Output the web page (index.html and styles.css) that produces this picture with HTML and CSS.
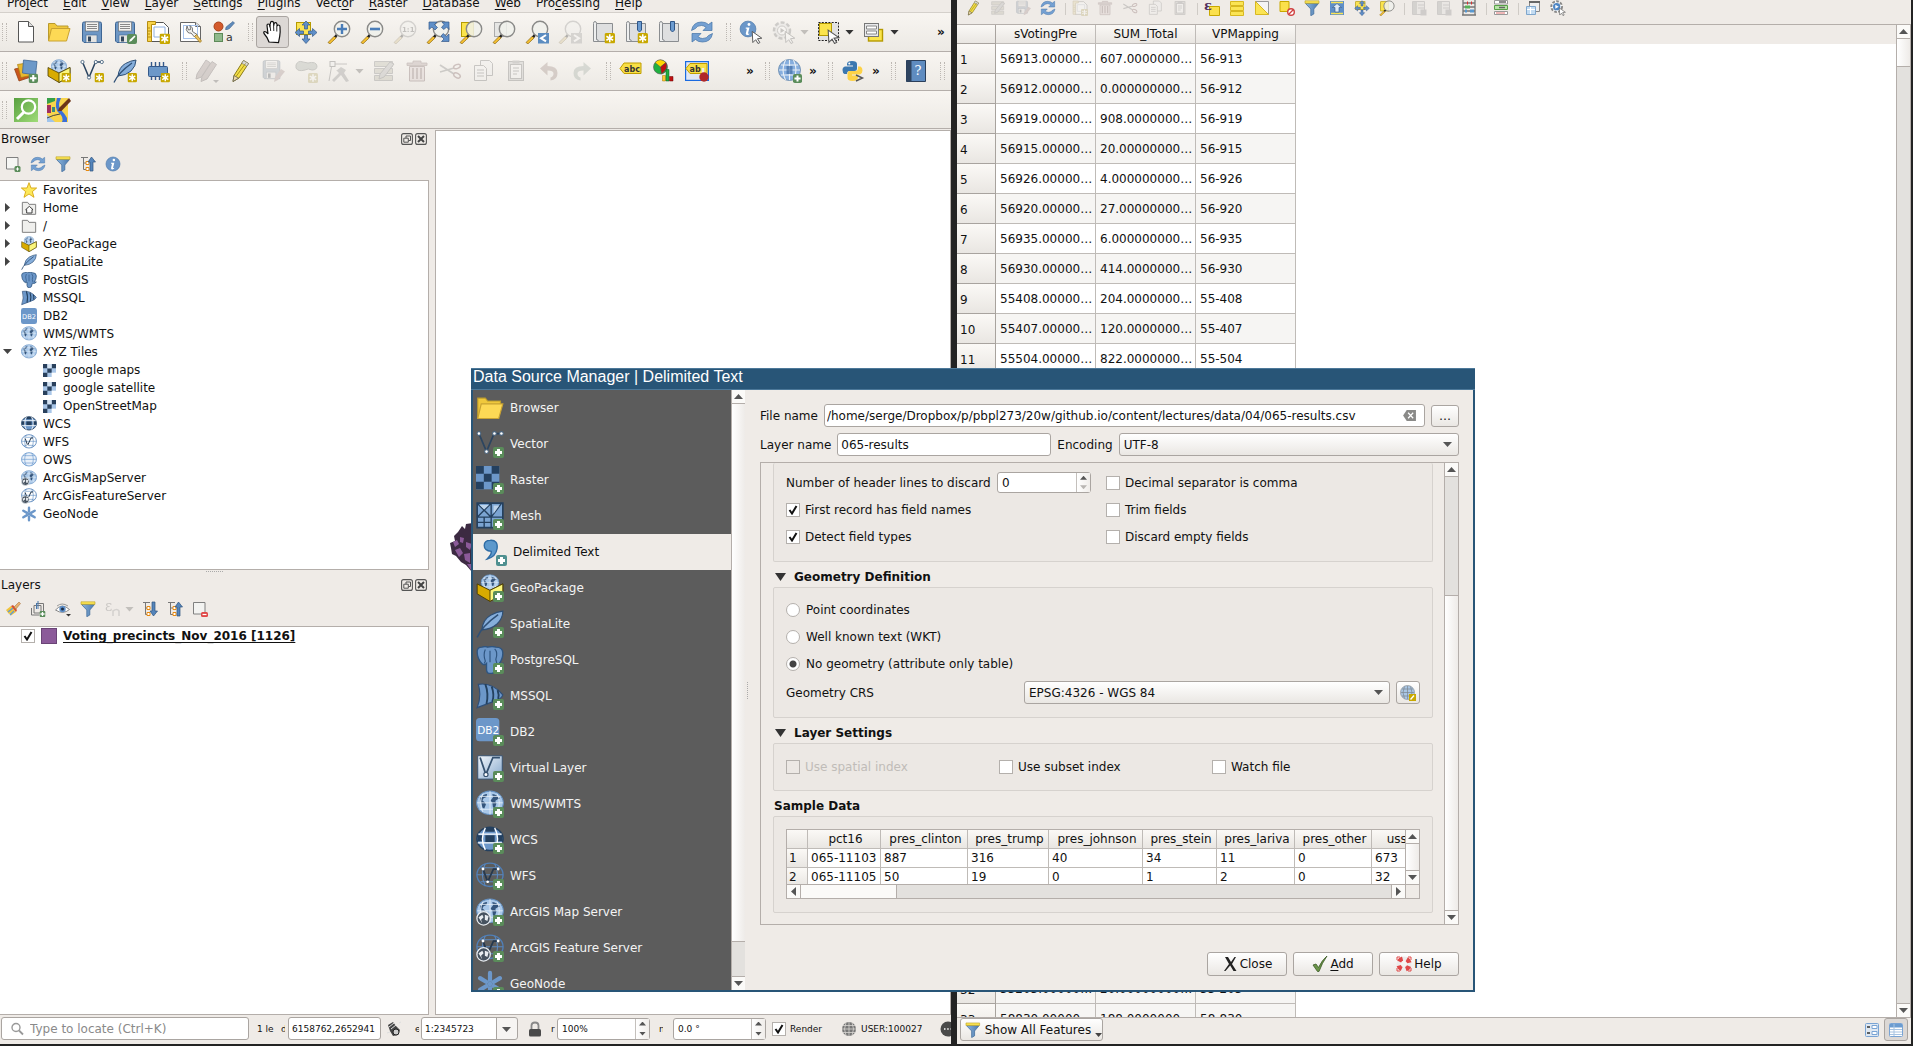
FILE: index.html
```html
<!DOCTYPE html>
<html lang="en">
<head>
    <meta charset="utf-8">
    <title>QGIS</title>
    <link rel="stylesheet" href="styles.css">
</head>
<body>

    <!-- Icons -->
    <svg class="sprite" width="0" height="0">
        <defs>
            <linearGradient id="g-green" x1="0" y1="0" x2="1" y2="1"><stop offset="0" stop-color="#58a040"/><stop offset="1" stop-color="#a0dc78"/></linearGradient>
            <linearGradient id="g-funnel" x1="0" y1="0" x2="1" y2="0"><stop offset="0" stop-color="#8db6de"/><stop offset="1" stop-color="#4a78ad"/></linearGradient>
            <linearGradient id="g-virt" x1="0" y1="0" x2="1" y2="1"><stop offset="0" stop-color="#f4f8fc"/><stop offset="1" stop-color="#86a8cc"/></linearGradient>
        </defs>

        <symbol id="b-new" viewBox="0 0 10 10"><rect width="10" height="10" rx="1.500" fill="#c8a800"/><path d="M5 1.200v7.600M1.800 3.100l6.400 3.800M8.200 3.100L1.800 6.900" stroke="#fff" stroke-width="1.500"/></symbol>
        <symbol id="b-plus" viewBox="0 0 10 10"><rect width="10" height="10" rx="2" fill="#5a8c5a"/><path d="M5 1.600v6.800M1.600 5h6.800" stroke="#fff" stroke-width="2.200"/></symbol>
        <symbol id="b-edit" viewBox="0 0 10 10"><rect width="10" height="10" rx="2" fill="#5a8c5a"/><path d="M2 8l1-2.500L7.500 1.500 8.500 2.500 4.500 7z" fill="#fff"/></symbol>
        <symbol id="cursor" viewBox="0 0 12 14"><path d="M1 1l10 7-4.500.5 2.500 4-2 1-2.300-4-3 3z" fill="#fff" stroke="#555" stroke-width="1"/></symbol>

        <symbol id="new" viewBox="0 0 24 24"><path d="M4.500 1.500h10l5 5v15.500h-15z" fill="#fff" stroke="#555"/><path d="M14.500 1.500v5h5" fill="#ddd" stroke="#555"/></symbol>
        <symbol id="open" viewBox="0 0 24 24"><path d="M1.500 20.500V3.500h6.500l2 2.500h11v4" fill="#f0c83c" stroke="#b99a2d"/><path d="M4.500 8.500h18.500l-3.500 12.500H1.500z" fill="#fdd955" stroke="#c8a232"/></symbol>
        <symbol id="save" viewBox="0 0 24 24"><path d="M2.500 3.500q0-1.500 1.500-1.500h16q1.500 0 1.500 1.500V22.500H4l-1.500-1.500z" fill="#6e97c4" stroke="#3e6694"/><rect x="5.500" y="2" width="13" height="9" fill="#f2f2f0" stroke="#666" stroke-width=".6"/><path d="M7 4.500h10M7 6.500h10M7 8.500h10" stroke="#888"/><rect x="6" y="15" width="11" height="7.500" fill="#e4e4e2" stroke="#3e6694" stroke-width=".6"/><rect x="8" y="16.500" width="3" height="5" fill="#33475c"/></symbol>
        <symbol id="saveas" viewBox="0 0 24 24"><use href="#save"/><use href="#b-edit" x="14" y="14" width="10" height="10"/></symbol>
        <symbol id="layout" viewBox="0 0 24 24"><path d="M4.500 2.500h13l5 5v14h-18z" fill="#fff" stroke="#555"/><path d="M8 7h11v10H8z" fill="none" stroke="#8fb0e0"/><path d="M1.500 1.500h8v3h-4v17h-4z" fill="#f7d34a" stroke="#b58c10"/><path d="M2 8h2M2 11h3M2 14h2M2 17h3" stroke="#b58c10"/><use href="#b-new" x="13.500" y="13.500" width="10.500" height="10.500"/></symbol>
        <symbol id="layouts" viewBox="0 0 24 24"><path d="M1.500 2.500h15l5 4v15h-20z" fill="#fff" stroke="#666"/><path d="M16.500 2.500v4h5" fill="#ddd" stroke="#666"/><rect x="4.500" y="5.500" width="14" height="13" fill="none" stroke="#a5c1ea"/><path d="M8 6q-2 4 1 6.500 2 1 3 .5l3.500 4 2.500-2.500-4.500-3q1-4-2.500-6l.5 4-2 .5z" fill="#f0f0ee" stroke="#555" stroke-width=".8"/><path d="M15.500 16.500l2-2 5 6.500-1.500 1.500z" fill="#e8c060" stroke="#987010" stroke-width=".7"/></symbol>
        <symbol id="styles" viewBox="0 0 24 24"><circle cx="6.500" cy="6.500" r="4.500" fill="#d35a2c" stroke="#a84018"/><path d="M13.500 9.500q0-3 2.500-4l5-4 1.500 1.500-5 5.500q-2 1.500-4 1z" fill="#5f8cbc" stroke="#3c608c" stroke-width=".6"/><rect x="2.500" y="13.500" width="8" height="8" fill="#8fb98b" stroke="#5d8a58"/><text x="14" y="21" font-size="11" font-family="DejaVu Sans" fill="#333">a</text></symbol>
        <symbol id="hand" viewBox="0 0 24 24"><path d="M8 22q-1-4-5-8.500-.8-2 .8-2 1.700.2 3.200 2.500L6 5.500q0-1.500 1.200-1.500 1.200 0 1.500 1.500L9.500 3q0-1.600 1.500-1.600T12.500 3l.5 1q.2-1.300 1.400-1.300 1.400 0 1.600 1.600l.3 1.700q.3-1 1.400-1 1.300 0 1.300 2 .5 6-.3 9.500L17.500 22.500z" fill="#fff" stroke="#111" stroke-width="1.200"/><path d="M9 5l.7 6M12.500 4l.3 7M15.800 5.500l0 6" stroke="#111" stroke-width=".9"/></symbol>
        <symbol id="pan" viewBox="0 0 24 24"><rect x="2.500" y="2.500" width="14" height="12" fill="#fbe454" stroke="#b59a00"/><path d="M12 1l4 4h-2.500v4h-3V5H8zM12 23.500l4-4.500h-2.500v-4h-3v4H8zM1 12.500l4.500-4v2.500h4v3h-4v2.500zM23 12.500l-4.500-4v2.500h-4v3h4v2.500z" fill="#5f8fc8" stroke="#35598a" stroke-width=".7"/></symbol>
        <symbol id="lens" viewBox="0 0 24 24"><path d="M1 22.500l6.500-6.500 1.800 1.800-6.300 6z" fill="#f6c030" stroke="#8a6510" stroke-width=".7"/><path d="M7 16.500l2-2.500 2 1.500-2 2.300z" fill="#222"/><circle cx="15" cy="9" r="7.700" fill="#f0f1ec" fill-opacity=".85" stroke="#8a8a88" stroke-width="1.400"/></symbol>
        <symbol id="zoomin" viewBox="0 0 24 24"><use href="#lens"/><path d="M15 4v10M10 9h10" stroke="#4a7db8" stroke-width="2.400"/></symbol>
        <symbol id="zoomout" viewBox="0 0 24 24"><use href="#lens"/><path d="M10 9h10" stroke="#4a7db8" stroke-width="2.600"/></symbol>
        <symbol id="zoomone" viewBox="0 0 24 24"><use href="#lens"/><text x="9" y="12" font-size="7" font-weight="bold" font-family="DejaVu Sans" fill="#555">1:1</text></symbol>
        <symbol id="zoomfull" viewBox="0 0 24 24"><use href="#lens"/><path d="M3 2h8l-2.500 2.500 3 3-2.500 2.500-3-3L3 9.500zM23 2h-7l2 2.500-2.500 3 2.500 2 2.500-2.500L23 9.500zM23 21.500h-7.500l2.500-2.500-3-3 2.300-2.500 3 3 2.700-2.500z" fill="#5f8fc8" stroke="#35598a" stroke-width=".7"/></symbol>
        <symbol id="zoomsel" viewBox="0 0 24 24"><rect x="2.500" y="2.500" width="12" height="14" fill="#fbe44c" stroke="#b59a00"/><use href="#lens"/></symbol>
        <symbol id="zoomlayer" viewBox="0 0 24 24"><rect x="2.500" y="2.500" width="12" height="14" fill="#e6e6e4" stroke="#aaa"/><use href="#lens"/></symbol>
        <symbol id="zoomlast" viewBox="0 0 24 24"><use href="#lens"/><rect x="13" y="13" width="11" height="10.500" fill="#5b8cc0"/><path d="M21 15l-5 3.200 5 3.200" fill="none" stroke="#fff" stroke-width="2"/></symbol>
        <symbol id="zoomnext" viewBox="0 0 24 24"><use href="#lens"/><rect x="13" y="13" width="11" height="10.500" fill="#999"/><path d="M16 15l5 3.200-5 3.200" fill="none" stroke="#fff" stroke-width="2"/></symbol>
        <symbol id="book" viewBox="0 0 24 24"><path d="M5.500 3.500h16v18h-16z" fill="#dedfe0" stroke="#8a8d90"/><path d="M2.500 21.500V3.500q0-2 1.500-2t1.500 2v16q2.500 0 1.500 2z" fill="#eeefef" stroke="#8a8d90"/></symbol>
        <symbol id="newmap" viewBox="0 0 24 24"><use href="#book"/><use href="#b-new" x="13.500" y="13" width="10.500" height="10.500"/></symbol>
        <symbol id="bookmark" viewBox="0 0 24 24"><use href="#book"/><path d="M13.500 1.500h4v8.500l-2 2-2-2z" fill="#6b9bd0" stroke="#2f5688"/></symbol>
        <symbol id="newbookmark" viewBox="0 0 24 24"><use href="#bookmark"/><use href="#b-new" x="13.500" y="13" width="10.500" height="10.500"/></symbol>
        <symbol id="refresh" viewBox="0 0 24 24"><path d="M1.500 10.500Q3 2 11.500 2q4.500 0 7 2.500L22 2v8.500h-9l3-3q-2-2-4.500-2Q7 5.500 5.500 8.500z" fill="#74a0d2" stroke="#4472a6" stroke-width=".7"/><path d="M22.500 13.500Q21 22 12.500 22q-4.500 0-7-2.500L2 22v-8.500h9l-3 3q2 2 4.500 2 4.500 0 6-3z" fill="#74a0d2" stroke="#4472a6" stroke-width=".7"/></symbol>
        <symbol id="info" viewBox="0 0 24 24"><circle cx="12" cy="12" r="10.500" fill="#6b97c9" stroke="#4d79ab"/><circle cx="13.300" cy="6" r="1.900" fill="#fff"/><path d="M9 10h5l-2 8q1 .5 2-.5l-.5 1.800q-4 2-4.500-1L10.500 11.500H9z" fill="#fff"/></symbol>
        <symbol id="identify" viewBox="0 0 24 24"><use href="#info" width="18" height="18"/><use href="#cursor" x="12" y="10.500" width="12" height="13.500"/></symbol>
        <symbol id="action" viewBox="0 0 24 24"><circle cx="10" cy="10.500" r="8" fill="#ddd" stroke="#777" stroke-width="2.500" stroke-dasharray="4 2"/><circle cx="10" cy="10.500" r="4.500" fill="#fff" stroke="#777"/><path d="M8.500 8l4 2.500-4 2.500z" fill="#666"/><use href="#cursor" x="12" y="10.500" width="12" height="13.500"/></symbol>
        <symbol id="select" viewBox="0 0 24 24"><rect x="1.500" y="2.500" width="20" height="18" fill="#e2e2e2" stroke="#222" stroke-dasharray="2 1.300"/><rect x="2.500" y="3.500" width="12" height="12" fill="#fbe44c" stroke="#b59a00"/><use href="#cursor" x="9.500" y="9" width="14" height="15"/></symbol>
        <symbol id="form" viewBox="0 0 24 24"><rect x="6.500" y="9.500" width="14" height="11.500" fill="#fbe44c" stroke="#b59a00" stroke-width="1.400"/><rect x="2.500" y="3.500" width="14" height="13" fill="#e9eaec" stroke="#777"/><path d="M4.500 6h10v3h-10zM4.500 11h10v3h-10z" fill="#fff" stroke="#888"/></symbol>

        <symbol id="dsm" viewBox="0 0 24 24"><path d="M.5 10l13-3 3.500 11-12 4z" fill="#c9561c" stroke="#8c3c10" stroke-width=".7"/><path d="M3.500 5.500L16 3.500l3 12.500-12 2.500z" fill="#e8b830" stroke="#a97f10" stroke-width=".7"/><path d="M9.500 1l13.500 1.500L21.500 16 8.500 14z" fill="#6c98c8" stroke="#3e6694" stroke-width=".8"/><use href="#b-plus" x="14.500" y="14.500" width="9.500" height="9.500"/></symbol>
        <symbol id="globe" viewBox="0 0 24 24"><ellipse cx="12" cy="11" rx="11.400" ry="10" fill="#a9c8e9" stroke="#6591c2"/><path d="M3.500 7q3-3.500 6-3.500l-.5 2.500-2.500 1-1 2 2 1.500 1 2-1.500 3.500-1.500-1-1-4zM14 3.500q4 .5 6.500 4l-2 .5-2 1.500 1 2-1.500 4.500-1.500-1.500-.5-3.500-1.500-2 2-2.500z" fill="#35557c"/><path d="M1 11h22M12 1v20M3 5.500h18M3 16.500h18M6 3q-4 8 0 16M18 3q4 8 0 16" stroke="#e6eff8" stroke-width=".7" fill="none"/></symbol>
        <symbol id="gpkg" viewBox="0 0 24 24"><use href="#globe" x="4" y="-1" width="16" height="18"/><path d="M1 8.500L12 14l11-5.500V17L12 23.500 1 17z" fill="#d8ab00" stroke="#4a3c00" stroke-width=".8"/><path d="M12 14l11-5.500V17l-11 6.500z" fill="#fbf67c" stroke="#4a3c00" stroke-width=".8"/></symbol>
        <symbol id="gpkgnew" viewBox="0 0 24 24"><use href="#gpkg"/><use href="#b-new" x="14.500" y="14" width="9.500" height="9.500"/></symbol>
        <symbol id="vector" viewBox="0 0 24 24"><path d="M2.500 3L9 18.500 15.500 3H22" fill="none" stroke="#2c4560" stroke-width="1.500"/><g fill="#fff" stroke="#4b6680" stroke-width=".9"><circle cx="2.500" cy="3" r="1.600"/><circle cx="9" cy="18.500" r="1.600"/><circle cx="15.800" cy="3" r="1.600"/><circle cx="21.800" cy="3" r="1.600"/></g></symbol>
        <symbol id="vectornew" viewBox="0 0 24 24"><use href="#vector"/><use href="#b-new" x="14.500" y="14" width="9.500" height="9.500"/></symbol>
        <symbol id="feather" viewBox="0 0 24 24"><path d="M5 17Q6 8 12.500 4.500 18 1.500 23 1q0 6-5 11-5 4.500-13 5z" fill="#86aedb" stroke="#2f5076"/><path d="M1 23.500Q5 14 19 4" fill="none" stroke="#2f5076" stroke-width="1.300"/></symbol>
        <symbol id="feathernew" viewBox="0 0 24 24"><use href="#feather"/><use href="#b-new" x="14.500" y="14" width="9.500" height="9.500"/></symbol>
        <symbol id="chip" viewBox="0 0 24 24"><path d="M5.500 3v18M9.500 3v18M13.500 3v18M17.500 3v18" stroke="#35598a" stroke-width="1.400"/><rect x="2.500" y="7.500" width="19" height="10" rx="1" fill="#6c98c8" stroke="#35598a"/><use href="#b-new" x="14.500" y="14" width="9.500" height="9.500"/></symbol>
        <symbol id="pencil" viewBox="0 0 24 24"><path d="M5 22.500l1-6L15.500 1.500l5 3L11 19z" fill="#f3de48" stroke="#8a7a18"/><path d="M15.500 1.500l5 3-1.700 2.700-5-3z" fill="#d8d8d8" stroke="#777" stroke-width=".6"/><path d="M8 17.500l9.500-13" stroke="#a89518"/><path d="M5 22.500l1-6 4.500 2.700z" fill="#efd9a8" stroke="#555" stroke-width=".7"/></symbol>
        <symbol id="pencils" viewBox="0 0 24 24"><g fill="#a88080" stroke="#665050"><path d="M1 20l1-5L11 1l4.500 3-9 14z"/><path d="M6 22.500l1-5 10-15 4.500 3L12 20z"/></g><path d="M18 21h6l-3 3z" fill="#555"/></symbol>
        <symbol id="saveedit" viewBox="0 0 24 24"><use href="#save" width="21" height="21"/><path d="M13 23l1-5 6-8 4 2.500-7 8.500z" fill="#b98080"/></symbol>
        <symbol id="polygon" viewBox="0 0 24 24"><path d="M2 6q2-5 7-3l5 1q8-2 9 3 0 4-5 4-4-2-7 0-7 2-9-2z" fill="#99aa98" stroke="#667066"/><use href="#b-new" x="14" y="14" width="10" height="10"/></symbol>
        <symbol id="vertex" viewBox="0 0 24 24"><path d="M3 5h17M5 5L2 22" stroke="#666" fill="none"/><rect x="3" y="2.500" width="5" height="5" fill="#eee" stroke="#555"/><path d="M9 12l5-4 5 3-2 3 5 8-3 1-5-7-7 7-2-2 7-7-2-2z" fill="#888"/></symbol>
        <symbol id="modify" viewBox="0 0 24 24"><path d="M2.500 2.500h18v5h-18zM2.500 9.500h18v5h-18zM2.500 16.500h18v5h-18z" fill="#b9b48a" stroke="#777"/><path d="M7 20l1-5L18 3l4 2L12 18z" fill="#aaa" stroke="#666"/></symbol>
        <symbol id="trash" viewBox="0 0 24 24"><path d="M4.500 7.500h15v14.500h-15z" fill="#e8c0c0" stroke="#8a5050"/><path d="M8 9v11M12 9v11M16 9v11" stroke="#8a5050" stroke-width="1.600"/><path d="M2 6.500h20v-2.500h-6V2H8v2H2z" fill="#c09090" stroke="#8a5050" stroke-width=".8"/></symbol>
        <symbol id="cut" viewBox="0 0 24 24"><path d="M2 6l14 9M2 13l14-4" stroke="#777" stroke-width="1.800"/><ellipse cx="19" cy="7.500" rx="3.500" ry="2" fill="none" stroke="#a05050" stroke-width="1.500" transform="rotate(-20 19 7.500)"/><ellipse cx="19" cy="16.500" rx="3.500" ry="2.200" fill="none" stroke="#a05050" stroke-width="1.500" transform="rotate(30 19 16.500)"/></symbol>
        <symbol id="copy" viewBox="0 0 24 24"><path d="M9.500 1.500h9l3 3v12h-12z" fill="#eee" stroke="#666"/><path d="M3.500 6.500h9l3 3v12h-12z" fill="#f4f4f4" stroke="#666"/><path d="M6 11h7M6 14h7M6 17h7" stroke="#666"/></symbol>
        <symbol id="paste" viewBox="0 0 24 24"><rect x="4.500" y="2.500" width="15" height="19" fill="#bbb" stroke="#666"/><rect x="6.500" y="5.500" width="11" height="14" fill="#f4f4f4" stroke="#666"/><path d="M8.500 1.500h7v3h-7z" fill="#888"/><path d="M9 9h6M9 12h6M9 15h4" stroke="#666"/></symbol>
        <symbol id="undo" viewBox="0 0 24 24"><path d="M3 9.500L10.500 3v4q10 0 10 7t-7 7.500v-3q3-1 3-4t-6-3v5z" fill="#b07a6a"/></symbol>
        <symbol id="redo" viewBox="0 0 24 24"><path d="M21 9.500L13.500 3v4q-10 0-10 7t7 7.500v-3q-3-1-3-4t6-3v5z" fill="#8aa892"/></symbol>
        <symbol id="abc" viewBox="0 0 24 24"><path d="M1 9.500l4-5.500h17v10.500H5z" fill="#f8df45" stroke="#c09d00"/><text x="5" y="12.500" font-size="8" font-weight="bold" font-family="DejaVu Sans" fill="#333">abc</text></symbol>
        <symbol id="diagram" viewBox="0 0 24 24"><circle cx="8.500" cy="8" r="7" fill="#20b040" stroke="#555" stroke-width=".6"/><path d="M8.500 8L3 3.500Q8-2 14 3.500z" fill="#ffd800" stroke="#555" stroke-width=".5"/><path d="M8.500 8L14 3.500q3 6-4.500 11.500z" fill="#c01010" stroke="#555" stroke-width=".5"/><path d="M10.500 16.500h3v5.500h-3z" fill="#ffc830" stroke="#a07000" stroke-width=".5"/><path d="M14 10.500h3v11.500h-3z" fill="#20b040" stroke="#0a5a20" stroke-width=".5"/><path d="M17.500 17.500h3.500v4.500h-3.500z" fill="#c01010" stroke="#600" stroke-width=".5"/></symbol>
        <symbol id="abpin" viewBox="0 0 24 24"><rect x=".6" y="2.600" width="22.800" height="18.800" fill="#dfe6f4" stroke="#1a6ae0" stroke-width="1.200"/><path d="M1 9.500l4-5h17v10H5z" fill="#f8df45" stroke="#c09d00"/><text x="4.500" y="12.500" font-size="8" font-weight="bold" font-family="DejaVu Sans" fill="#333">ab</text><path d="M18 16V9" stroke="#eee" stroke-width="2.500"/><circle cx="19" cy="18" r="4.700" fill="#b02828"/></symbol>
        <symbol id="grid" viewBox="0 0 24 24"><ellipse cx="12" cy="11" rx="11.200" ry="10" fill="#eaf1f9" stroke="#6d9bd0" stroke-width="1.300"/><path d="M1 11h22M3 5.500h18M3 16.500h18M8 1.500q-5 9.500 0 19M16 1.500q5 9.500 0 19" stroke="#6d9bd0" fill="none"/></symbol>
        <symbol id="globeadd" viewBox="0 0 24 24"><ellipse cx="11.500" cy="11" rx="11" ry="10.500" fill="#86aede" stroke="#7896b6"/><path d="M1 11h21M3 6h17M3 16h17M11.500 1v20M7.500 1q-5 10 0 20M15.500 1q5 10 0 20" stroke="#e9f0f6" stroke-width="1.100" fill="none"/><path d="M8.500 7h6v8h-6z" fill="#3e6ca6" opacity=".7"/><use href="#b-plus" x="15" y="15" width="9" height="9"/></symbol>
        <symbol id="python" viewBox="0 0 24 24"><path d="M11 2q5 0 5 3v5q0 2-2.500 2H8.500Q6 12 6 15H3.500Q1.500 14 1.500 11T4 7.500h8v-1H6V5q0-3 5-3z" fill="#3c78b0"/><circle cx="8.300" cy="4.500" r="1" fill="#fff"/><path d="M17 7.500h2.500q2 1 2 4t-2.500 4h-8v1h6v1.500q0 4-5.500 4T6.500 18v-4q0-2 2.500-2h5.500q2.500 0 2.500-3z" fill="#fdd247"/><path d="M15 16l6.500 3-6.500 3" fill="none" stroke="#555" stroke-width="1.400"/></symbol>
        <symbol id="help" viewBox="0 0 24 24"><path d="M2.500 1.500h19v21h-19z" fill="#5f8cc0" stroke="#2b3f5a"/><path d="M2.500 1.500h5v21h-5z" fill="#2f4460"/><text x="10.500" y="16" font-size="13" font-family="DejaVu Serif" fill="#fff">?</text></symbol>
        <symbol id="qms" viewBox="0 0 24 24"><rect width="24" height="24" fill="url(#g-green)"/><circle cx="14.500" cy="9" r="6.700" fill="none" stroke="#fff" stroke-width="2.200"/><path d="M10 14l-7 7" stroke="#fff" stroke-width="3"/></symbol>
        <symbol id="osm" viewBox="0 0 24 24"><path d="M0 0h21v24H0z" fill="#f8d44c"/><path d="M0 0h8v3l-8 3z" fill="#38a048"/><path d="M10 0h4q-4 8 0 12t6 8v4h-5q2-5-3-9T10 0z" fill="#3b6fd8"/><path d="M0 7h4v8H0z" fill="#a03060"/><path d="M5 9h3v5H5z" fill="#3a8a80"/><path d="M0 17l8 7H0z" fill="#9fc4ec"/><path d="M0 20q6-3 13-4" stroke="#444" fill="none"/><path d="M22 0l2 3L14.500 13l-3.500 0 1-3z" fill="#6c3418"/></symbol>

        <symbol id="newlayer" viewBox="0 0 16 16"><path d="M1.500 1.500h11.500v11.500H1.500z" fill="#f6f6f4" stroke="#808080"/><rect x="9.500" y="10" width="6" height="6" rx="1.500" fill="#5a8c5a"/><path d="M12.500 11.300v3.400M10.800 13h3.400" stroke="#fff"/></symbol>
        <symbol id="filter" viewBox="0 0 16 16"><path d="M1.500 3.500h13L9.800 9v5l-3 1.700V9z" fill="url(#g-funnel)" stroke="#44709e" stroke-width=".8"/><path d="M1 .8h14v2.500H1z" fill="#fbe454" stroke="#b8a020" stroke-width=".6"/></symbol>
        <symbol id="collapse" viewBox="0 0 16 16"><path d="M1 1.500h7M3.500 2v11.500h3M3.500 7h3" stroke="#777" fill="none"/><path d="M6 5.500h3v3H6zM6 11.500h3v3H6z" fill="#fff" stroke="#e88a10"/><path d="M11.500 1L15.500 6H13v9h-3V6H8z" fill="#5585bb" stroke="#2f5580" stroke-width=".7"/></symbol>
        <symbol id="expand" viewBox="0 0 16 16"><path d="M1 1.500h7M3.500 2v11.500h3M3.500 7h3" stroke="#777" fill="none"/><path d="M5 5.500h3v3H5zM5 11.500h3v3H5z" fill="#fff" stroke="#e88a10"/><path d="M11.500 15L15.500 10H13V1h-3v9H8z" fill="#5585bb" stroke="#2f5580" stroke-width=".7"/></symbol>
        <symbol id="brush" viewBox="0 0 16 16"><path d="M1 9l5-4 5 6-5 3.500q-1-2-2.500-2z" fill="#f2c43a"/><path d="M3 11l5-4M5 14l4-4" stroke="#5c9ad8" stroke-width="1.300"/><path d="M6 5l2-1 4 5-1 2z" fill="#d65030"/><path d="M9 6l5-5 1.500 1.500L11 8z" fill="#e8b070" stroke="#a06a30" stroke-width=".5"/></symbol>
        <symbol id="group" viewBox="0 0 16 16"><path d="M1.500 7v7h8M4 4.500v7.500h7V4.500zM6.500 2.500h7v8" fill="none" stroke="#777"/><path d="M8 0v8M6.500 8V2" stroke="#4978ad"/><use href="#b-plus" x="9.500" y="10" width="6" height="6"/></symbol>
        <symbol id="eye" viewBox="0 0 16 16"><path d="M.5 9Q7 1.500 14.500 8.500 8 14 .5 9z" fill="#fff" stroke="#888"/><circle cx="7.500" cy="8" r="3.200" fill="#5f8fc8"/><circle cx="7.500" cy="8" r="1.500" fill="#1c2c44"/><path d="M2 5q5-4 11 0" stroke="#999" fill="none"/><path d="M11 13h5l-2.500 2.500z" fill="#333"/></symbol>
        <symbol id="epsilon" viewBox="0 0 16 16"><text x="0" y="10" font-size="14" font-family="DejaVu Serif" fill="#777">ε</text><path d="M8 15v-5q4-3 6 0v5" fill="none" stroke="#999" stroke-width="1.600"/></symbol>
        <symbol id="remove" viewBox="0 0 16 16"><path d="M1.500 1.500h11.500v11.500H1.500z" fill="#f3f3f1" stroke="#808080"/><rect x="9" y="11" width="7" height="5" rx="1.500" fill="#e04848"/><path d="M10.500 13.500h4" stroke="#fff" stroke-width="1.200"/></symbol>
        <symbol id="float" viewBox="0 0 12 12"><rect x=".6" y=".6" width="10.800" height="10.800" rx="2" fill="none" stroke="#555" stroke-width="1.100"/><path d="M5 5V3h4.500v4.500h-2M2.800 5.200h4.500v4H2.800z" fill="none" stroke="#555"/></symbol>
        <symbol id="closebox" viewBox="0 0 12 12"><rect x=".6" y=".6" width="10.800" height="10.800" rx="2" fill="none" stroke="#555" stroke-width="1.100"/><path d="M3 3l6 6M9 3L3 9" stroke="#444" stroke-width="2"/></symbol>

        <symbol id="star" viewBox="0 0 24 24"><path d="M12 1l3 8h8.500l-6.500 5.500L19.500 23 12 18l-7.500 5L7 14.500.5 9H9z" fill="#fde85a" stroke="#d4a40c" stroke-width="1.300"/></symbol>
        <symbol id="folder" viewBox="0 0 24 24"><path d="M2 3.500h8l2 3h10v15H2z" fill="#efefed" stroke="#808080" stroke-width="1.500"/></symbol>
        <symbol id="home" viewBox="0 0 24 24"><use href="#folder"/><path d="M7 14.500l5.500-5 5.500 5h-1.500v5h-8v-5z" fill="#fff" stroke="#333" stroke-width="1.400"/></symbol>
        <symbol id="elephant" viewBox="0 0 24 24"><path d="M1 5q0-4 4-4 3-1 5 0 4-1 7 0 6 0 6 5 0 5-3 9h3q-2 3-6 2-1 7-4 6.500-4 .5-4-3.500V15q-2 2-4 0Q1 11 1 5z" fill="#6c97c9" stroke="#2f5580" stroke-width="1.200"/><path d="M8 3q-2 4 0 10l-1 2M16 2.500q3 3 1 9l1 4M12 4v10" stroke="#2f5580" fill="none"/></symbol>
        <symbol id="mssql" viewBox="0 0 24 24"><path d="M2 2q12-2 21 9-1 4-10 6.500L1 22q4-10 1-20z" fill="#6c97c9" stroke="#2f4f78"/><path d="M8 1.800q3 8 1 17M13.500 4q2.500 7 .5 13M18.500 7q1.500 4 .5 7.500" stroke="#24415f" stroke-width="1.600" fill="none"/></symbol>
        <symbol id="db2" viewBox="0 0 24 24"><rect width="24" height="24" rx="3.500" fill="#6c97c9"/><text x="1.500" y="16" font-size="10" font-family="DejaVu Sans" fill="#fff">DB2</text></symbol>
        <symbol id="db2big" viewBox="0 0 24 24"><rect width="20" height="20" rx="3" fill="#6c97c9"/><text x="1" y="14" font-size="9" font-family="DejaVu Sans" fill="#fff">DB2</text></symbol>
        <symbol id="tiles" viewBox="0 0 24 24"><path d="M0 0h24v24H0z" fill="#a9c6e8"/><path d="M0 0h8v8H0zM16 0h8v8h-8zM8 8h8v8H8zM0 16h8v8H0z" fill="#29405c"/><path d="M8 0h8v8H8z" fill="#d7e5f4"/><path d="M16 16h8v8h-8z" fill="#fff"/></symbol>
        <symbol id="raster" viewBox="0 0 24 24"><path d="M0 0h20v20H0z" fill="#6c97c9"/><path d="M0 0h6.700v6.700H0zM13.400 0H20v6.700h-6.600zM6.700 6.700h6.700v6.700H6.700zM0 13.400h6.700V20H0zM13.400 13.400H20V20h-6.600z" fill="#24405f"/></symbol>
        <symbol id="wcs" viewBox="0 0 24 24"><ellipse cx="12" cy="11" rx="11.200" ry="10" fill="#6c97c9" stroke="#24405f" stroke-width="1.300"/><path d="M8 8h8v6H8zM1.500 8H6v5H1.200zM18 8h4.500l.5 5h-5zM8 1.500h8V5H8z" fill="#24405f"/><path d="M2 7h20M1.500 14.500h21M8 1.500q-5 9.500 0 19M16 1.500q5 9.500 0 19" stroke="#fff" stroke-width="1.200" fill="none"/></symbol>
        <symbol id="wfs" viewBox="0 0 24 24"><ellipse cx="12" cy="11" rx="11.200" ry="10" fill="none" stroke="#4f7fb8" stroke-width="1.200"/><path d="M1 11h22M4 5h16M4 17h16M8 1.500q-5 9.500 0 19M16 1.500q5 9.500 0 19" stroke="#5b89bf" stroke-width=".9" fill="none"/><path d="M6 6l4 11 5-11h4" stroke="#25384e" stroke-width="1.500" fill="none"/><g fill="#fff"><circle cx="6" cy="6" r="1.200"/><circle cx="10" cy="17" r="1.200"/><circle cx="19" cy="6" r="1.200"/></g></symbol>
        <symbol id="arc" viewBox="0 0 12 12"><circle cx="6" cy="6" r="5.300" fill="#46525f" stroke="#e8ecf0" stroke-width="1"/><path d="M2 5l3-2 1 2-2 2 1 3M7 3l3 1-1 4-2-1z" fill="#e8ecf0"/></symbol>
        <symbol id="arcmap" viewBox="0 0 24 24"><use href="#globe"/><use href="#arc" y="11" width="13" height="13"/></symbol>
        <symbol id="arcfeat" viewBox="0 0 24 24"><use href="#wfs"/><use href="#arc" y="11" width="13" height="13"/></symbol>
        <symbol id="geonode" viewBox="0 0 24 24"><path d="M12 8.500V2.500M12 15.500v6M9 10.300L3.500 7M15 13.700l5.500 3.300M15 10.300L20.500 7M9 13.700L3.500 17" stroke="#6c97c9" stroke-width="3.600" stroke-linecap="round"/><circle cx="12" cy="12" r="2" fill="#6c97c9"/></symbol>
        <symbol id="mesh" viewBox="0 0 24 24"><path d="M1 1h22v21H1z" fill="#7ba4d2" stroke="#24405f" stroke-width="1.400"/><path d="M1 1l12 12M13 1L1 13M13 13L22 1M13 1v21M1 13h22M1 17.500h12M7 13v9" stroke="#24405f" stroke-width="1.200"/><path d="M3 2.500h8l-4 4zM15 3h5l-5 7z" fill="#bdd4ec"/></symbol>
        <symbol id="comma" viewBox="0 0 24 24"><path d="M9.500 2q7-.5 6 7-1 7-8.500 9 4-4 3.500-6.500Q4.500 11 4.500 6.500T9.500 2z" fill="#5c98cc" stroke="#2f6ca5" stroke-width="1.200"/></symbol>
        <symbol id="virtual" viewBox="0 0 24 24"><path d="M1.500 1.500h21v20h-21z" fill="url(#g-virt)" stroke="#34506e" stroke-width=".8"/><path d="M3.500 3L8.500 17.500 14.500 3h6" fill="none" stroke="#34506e" stroke-width="1.500"/><circle cx="8.500" cy="17.500" r="1.800" fill="#fff" stroke="#34506e"/></symbol>

        <symbol id="exprsel" viewBox="0 0 16 16"><path d="M5.500 6.500h10v9h-10z" fill="#fbe04c" stroke="#c8a800"/><text x="0" y="10" font-size="13" font-weight="bold" font-family="DejaVu Serif" fill="#503060">ε</text></symbol>
        <symbol id="selall" viewBox="0 0 16 16"><path d="M1.500 1.500h13v4h-13zM1.500 6.500h13v4h-13zM1.500 11.500h13v4h-13z" fill="#fbe454" stroke="#d8b820"/></symbol>
        <symbol id="invert" viewBox="0 0 16 16"><path d="M1.500 1.500h13v13z" fill="#f4f4f4" stroke="#999"/><path d="M1.500 1.500v13h13z" fill="#fbe454" stroke="#d8b820"/></symbol>
        <symbol id="deselect" viewBox="0 0 16 16"><path d="M1 1.500h9v10H1z" fill="#fbe04c" stroke="#c8a800"/><circle cx="12" cy="12" r="3.300" fill="#fff" stroke="#d04040" stroke-width="1.400"/><path d="M9.800 14.200l4.400-4.400" stroke="#d04040" stroke-width="1.300"/></symbol>
        <symbol id="movetop" viewBox="0 0 16 16"><path d="M1 1h14v14H1z" fill="#5f8fc8"/><path d="M2 2.500h12M2 13.500h12" stroke="#fbe454" stroke-width="1.500"/><path d="M8 3.500l4.500 4H10v4.500H6V7.500H3.500z" fill="#dfeaf6" stroke="#2f5580" stroke-width=".6"/></symbol>
        <symbol id="column" viewBox="0 0 16 16"><path d="M1.500 1.500h12v13h-12z" fill="#ddd" stroke="#888"/><path d="M2 2h4v12H2z" fill="#999"/><path d="M7 5h6M7 8h6" stroke="#888"/><path d="M9.500 9.500h6v6h-6z" fill="#888"/></symbol>
        <symbol id="abacus" viewBox="0 0 16 16"><path d="M1 15h14M2 0v15M14 0v15M2 3h12M2 7h12M2 11h12" stroke="#777" stroke-width="1.300"/><path d="M6 3h1M10 3h1" stroke="#d83030" stroke-width="3"/><path d="M4 7h5" stroke="#58b058" stroke-width="3"/><path d="M4 11h2M9 11h4" stroke="#5898d0" stroke-width="3"/></symbol>
        <symbol id="condfmt" viewBox="0 0 16 16"><path d="M1.500.5h13v3.500h-13zM1.500 11.500h13v3h-13z" fill="#fff" stroke="#999"/><path d="M1.500 5.500h13v4h-13z" fill="#b8e4a8" stroke="#58a048"/><path d="M6 2h7M6 7.500h6" stroke="#666" stroke-width="1.300"/><path d="M3 13h9" stroke="#e07070"/></symbol>
        <symbol id="dock" viewBox="0 0 16 16"><path d="M4.500 1.500h10v10h-10z" fill="#eee" stroke="#888"/><path d="M4 1h11v2H4z" fill="#666"/><path d="M1.500 6.500h9v8h-9z" fill="#c4dcf2" stroke="#7fa6cc"/><path d="M2 9.500h8M5.500 7v7" stroke="#fff"/></symbol>
        <symbol id="formview" viewBox="0 0 16 16"><rect x="1.500" y="1.500" width="13" height="13" rx="1" fill="#dfe8f2" stroke="#7aa4d4"/><path d="M3 5h3M3 11h3" stroke="#333" stroke-width="1.500"/><path d="M8 3.500h5v3H8zM8 9.500h5v3H8z" fill="#fff" stroke="#7aa4d4"/></symbol>
        <symbol id="tableview" viewBox="0 0 16 16"><rect x="1.500" y="1.500" width="13" height="13" rx="1" fill="#fff" stroke="#7aa4d4"/><path d="M2 2h12v3.500H2z" fill="#6c9cd0"/><path d="M2 7.500h12M2 10h12M2 12.500h12M6 2v12" stroke="#a8c4e2"/></symbol>
    </svg>

    <div class="desktop">

        <!-- Main window -->
        <section class="main-window">
            <nav class="menubar">
                <a href="#">Pro<u>j</u>ect</a>
                <a href="#"><u>E</u>dit</a>
                <a href="#"><u>V</u>iew</a>
                <a href="#"><u>L</u>ayer</a>
                <a href="#"><u>S</u>ettings</a>
                <a href="#"><u>P</u>lugins</a>
                <a href="#">Vect<u>o</u>r</a>
                <a href="#"><u>R</u>aster</a>
                <a href="#"><u>D</u>atabase</a>
                <a href="#"><u>W</u>eb</a>
                <a href="#">Pro<u>c</u>essing</a>
                <a href="#"><u>H</u>elp</a>
            </nav>

            <div class="toolbar">
                <span class="handle first"></span>
                <button class="tool" title="New Project"><svg><use href="#new"/></svg></button>
                <button class="tool" title="Open Project"><svg><use href="#open"/></svg></button>
                <button class="tool" title="Save Project"><svg><use href="#save"/></svg></button>
                <button class="tool" title="Save Project As"><svg><use href="#saveas"/></svg></button>
                <button class="tool" title="New Print Layout"><svg><use href="#layout"/></svg></button>
                <button class="tool" title="Layout Manager"><svg><use href="#layouts"/></svg></button>
                <button class="tool" title="Style Manager"><svg><use href="#styles"/></svg></button>
                <span class="handle"></span>
                <button class="tool pressed" title="Pan Map"><svg><use href="#hand"/></svg></button>
                <button class="tool" title="Pan Map to Selection"><svg><use href="#pan"/></svg></button>
                <button class="tool" title="Zoom In"><svg><use href="#zoomin"/></svg></button>
                <button class="tool" title="Zoom Out"><svg><use href="#zoomout"/></svg></button>
                <button class="tool" title="Zoom to Native Resolution" disabled><svg><use href="#zoomone"/></svg></button>
                <button class="tool" title="Zoom Full"><svg><use href="#zoomfull"/></svg></button>
                <button class="tool" title="Zoom to Selection"><svg><use href="#zoomsel"/></svg></button>
                <button class="tool" title="Zoom to Layer"><svg><use href="#zoomlayer"/></svg></button>
                <button class="tool" title="Zoom Last"><svg><use href="#zoomlast"/></svg></button>
                <button class="tool" title="Zoom Next" disabled><svg><use href="#zoomnext"/></svg></button>
                <button class="tool" title="New Map View"><svg><use href="#newmap"/></svg></button>
                <button class="tool" title="New Bookmark"><svg><use href="#newbookmark"/></svg></button>
                <button class="tool" title="Show Bookmarks"><svg><use href="#bookmark"/></svg></button>
                <button class="tool" title="Refresh"><svg><use href="#refresh"/></svg></button>
                <span class="handle"></span>
                <button class="tool" title="Identify Features"><svg><use href="#identify"/></svg></button>
                <button class="tool" title="Run Feature Action" disabled><svg><use href="#action"/></svg></button>
                <button class="drop" title="Actions" disabled></button>
                <button class="tool" title="Select Features"><svg><use href="#select"/></svg></button>
                <button class="drop" title="Selection tools"></button>
                <button class="tool" title="Select by Value"><svg><use href="#form"/></svg></button>
                <button class="drop" title="Select by"></button>
                <button class="more last" title="More">»</button>
            </div>

            <div class="toolbar">
                <span class="handle first"></span>
                <button class="tool" title="Data Source Manager"><svg><use href="#dsm"/></svg></button>
                <button class="tool" title="New GeoPackage Layer"><svg><use href="#gpkgnew"/></svg></button>
                <button class="tool" title="New Shapefile Layer"><svg><use href="#vectornew"/></svg></button>
                <button class="tool" title="New SpatiaLite Layer"><svg><use href="#feathernew"/></svg></button>
                <button class="tool" title="New Scratch Layer"><svg><use href="#chip"/></svg></button>
                <span class="handle"></span>
                <button class="tool" title="Current Edits" disabled><svg><use href="#pencils"/></svg></button>
                <button class="tool" title="Toggle Editing"><svg><use href="#pencil"/></svg></button>
                <button class="tool" title="Save Layer Edits" disabled><svg><use href="#saveedit"/></svg></button>
                <button class="tool" title="Add Polygon" disabled><svg><use href="#polygon"/></svg></button>
                <button class="tool" title="Vertex Tool" disabled><svg><use href="#vertex"/></svg></button>
                <button class="drop" title="Vertex tools" disabled></button>
                <button class="tool" title="Modify Attributes" disabled><svg><use href="#modify"/></svg></button>
                <button class="tool" title="Delete Selected" disabled><svg><use href="#trash"/></svg></button>
                <button class="tool" title="Cut Features" disabled><svg><use href="#cut"/></svg></button>
                <button class="tool" title="Copy Features" disabled><svg><use href="#copy"/></svg></button>
                <button class="tool" title="Paste Features" disabled><svg><use href="#paste"/></svg></button>
                <button class="tool" title="Undo" disabled><svg><use href="#undo"/></svg></button>
                <button class="tool" title="Redo" disabled><svg><use href="#redo"/></svg></button>
                <span class="handle"></span>
                <button class="tool" title="Layer Labeling"><svg><use href="#abc"/></svg></button>
                <button class="tool" title="Layer Diagrams"><svg><use href="#diagram"/></svg></button>
                <button class="tool" title="Pinned Labels"><svg><use href="#abpin"/></svg></button>
                <button class="more spaced" title="More">»</button>
                <span class="handle"></span>
                <button class="tool" title="MetaSearch"><svg><use href="#globeadd"/></svg></button>
                <button class="more" title="More">»</button>
                <span class="handle"></span>
                <button class="tool" title="Python Console"><svg><use href="#python"/></svg></button>
                <button class="more" title="More">»</button>
                <span class="handle"></span>
                <button class="tool" title="Help Contents"><svg><use href="#help"/></svg></button>
                <span class="handle"></span>
            </div>

            <div class="toolbar plugins">
                <span class="handle first"></span>
                <button class="tool" title="Search QMS"><svg><use href="#qms"/></svg></button>
                <button class="tool" title="OSM Place Search"><svg><use href="#osm"/></svg></button>
            </div>

            <div class="workspace">
                <div class="docks">
                    <div class="dock">
                        <div class="dock-title">
                            <span>Browser</span>
                            <button class="dock-btn" title="Float"><svg><use href="#float"/></svg></button>
                            <button class="dock-btn" title="Close"><svg><use href="#closebox"/></svg></button>
                        </div>
                        <div class="dock-tools">
                            <button class="mini" title="Add Layer"><svg><use href="#newlayer"/></svg></button>
                            <button class="mini" title="Refresh"><svg><use href="#refresh"/></svg></button>
                            <button class="mini" title="Filter Browser"><svg><use href="#filter"/></svg></button>
                            <button class="mini" title="Collapse All"><svg><use href="#collapse"/></svg></button>
                            <button class="mini" title="Properties"><svg><use href="#info"/></svg></button>
                        </div>
                        <ul class="tree">
                            <li><i></i><svg><use href="#star"/></svg>Favorites</li>
                            <li><i class="closed"></i><svg><use href="#home"/></svg>Home</li>
                            <li><i class="closed"></i><svg><use href="#folder"/></svg>/</li>
                            <li><i class="closed"></i><svg><use href="#gpkg"/></svg>GeoPackage</li>
                            <li><i class="closed"></i><svg><use href="#feather"/></svg>SpatiaLite</li>
                            <li><i></i><svg><use href="#elephant"/></svg>PostGIS</li>
                            <li><i></i><svg><use href="#mssql"/></svg>MSSQL</li>
                            <li><i></i><svg><use href="#db2"/></svg>DB2</li>
                            <li><i></i><svg><use href="#globe"/></svg>WMS/WMTS</li>
                            <li><i class="opened"></i><svg><use href="#globe"/></svg>XYZ Tiles</li>
                            <li class="child"><svg><use href="#tiles"/></svg>google maps</li>
                            <li class="child"><svg><use href="#tiles"/></svg>google satellite</li>
                            <li class="child"><svg><use href="#tiles"/></svg>OpenStreetMap</li>
                            <li><i></i><svg><use href="#wcs"/></svg>WCS</li>
                            <li><i></i><svg><use href="#wfs"/></svg>WFS</li>
                            <li><i></i><svg><use href="#grid"/></svg>OWS</li>
                            <li><i></i><svg><use href="#arcmap"/></svg>ArcGisMapServer</li>
                            <li><i></i><svg><use href="#arcfeat"/></svg>ArcGisFeatureServer</li>
                            <li><i></i><svg><use href="#geonode"/></svg>GeoNode</li>
                        </ul>
                    </div>
                    <div class="splitter"></div>
                    <div class="dock">
                        <div class="dock-title">
                            <span>Layers</span>
                            <button class="dock-btn" title="Float"><svg><use href="#float"/></svg></button>
                            <button class="dock-btn" title="Close"><svg><use href="#closebox"/></svg></button>
                        </div>
                        <div class="dock-tools">
                            <button class="mini" title="Layer Styling"><svg><use href="#brush"/></svg></button>
                            <button class="mini" title="Add Group"><svg><use href="#group"/></svg></button>
                            <button class="mini" title="Map Themes"><svg><use href="#eye"/></svg></button>
                            <button class="mini" title="Filter Legend"><svg><use href="#filter"/></svg></button>
                            <button class="mini" title="Filter by Expression" disabled><svg><use href="#epsilon"/></svg></button>
                            <button class="drop" title="Expression" disabled></button>
                            <button class="mini" title="Expand All"><svg><use href="#expand"/></svg></button>
                            <button class="mini" title="Collapse All"><svg><use href="#collapse"/></svg></button>
                            <button class="mini" title="Remove Layer"><svg><use href="#remove"/></svg></button>
                        </div>
                        <div class="tree">
                            <label class="layer">
                                <input type="checkbox" class="check" checked>
                                <span class="swatch"></span>
                                <span class="layer-name">Voting_precincts_Nov_2016 [1126]</span>
                            </label>
                        </div>
                    </div>
                </div>
                <div class="canvas">
                    <svg class="precincts" viewBox="0 0 30 50"><path d="M8 10l4-6 3 3 1-5 14-2v50h-8l-6-7-5-3-5-6-4-2-1-6-1-5 5-2-1-5z" fill="#3c2a42"/><path d="M3 20l4-2 2 4-4 3zM10 15l4 1-1 5-3-1zM5 28l5-2 3 5-4 4zM14 32l6-1v10l-5-3zM16 20l6 2-2 6-4-3zM17 42l9 0v6l-5 0z" fill="#8b5a99"/></svg>
                </div>
            </div>

            <footer class="statusbar">
                <label class="locator">
                    <svg viewBox="0 0 14 14"><circle cx="6" cy="5.500" r="4" fill="none" stroke="#999" stroke-width="1.400"/><path d="M9 8.500l4 4" stroke="#999" stroke-width="1.800"/></svg>
                    <input type="text" placeholder="Type to locate (Ctrl+K)" title="Locator">
                </label>
                <span class="legend">1 le</span>
                <label class="clip left" for="coord">d</label>
                <input class="field coord" id="coord" type="text" value="6158762,2652941">
                <button class="mini" title="Toggle Extents"><svg viewBox="0 0 16 16"><path d="M2 4l5-3 3 4 4 4-2 5-5 1-3-5z" fill="#444"/><path d="M3 6l5-4M5 8l5-4M7 12l5-4M13 2l2-1M1 12l3-1" stroke="#ddd"/><circle cx="10" cy="11" r="3" fill="#ccc" stroke="#222"/></svg></button>
                <label class="clip" for="scale">e</label>
                <select class="field scale" id="scale"><option>1:2345723</option></select>
                <svg class="lock" viewBox="0 0 14 16"><path d="M3.500 8V4.500Q3.500 1.500 7 1.500t3.500 3V8" fill="none" stroke="#888" stroke-width="1.800"/><rect x="1" y="8" width="12" height="7.500" rx="1.500" fill="#4a4a4a"/></svg>
                <label class="clip" for="magnifier">r</label>
                <span class="spin small"><input id="magnifier" type="text" value="100%"><span class="steps"><button title="Up"></button><button title="Down"></button></span></span>
                <label class="clip wide" for="rotation">n</label>
                <span class="spin small"><input id="rotation" type="text" value="0.0 °"><span class="steps"><button title="Up"></button><button title="Down"></button></span></span>
                <label class="render"><input type="checkbox" class="check" checked>Render</label>
                <button class="crs" title="Projection"><svg viewBox="0 0 16 16"><circle cx="8" cy="8" r="7" fill="#777"/><path d="M1 8h14M2 4.500h12M2 11.500h12M8 1v14M5 1.500q-3 6.500 0 13M11 1.500q3 6.500 0 13" stroke="#d8d6d2" stroke-width=".8" fill="none"/></svg>USER:100027</button>
                <button class="messages" title="Messages"><svg viewBox="0 0 16 16"><circle cx="8" cy="8" r="7.500" fill="#4a4a4a"/><path d="M4 8h1.500M7.200 8h1.500M10.500 8H12" stroke="#fff" stroke-width="1.600"/></svg></button>
            </footer>
        </section>

        <!-- Attribute table window -->
        <section class="table-window">
            <div class="table-tools">
                <button class="mini" title="Toggle Editing"><svg><use href="#pencil"/></svg></button>
                <button class="mini" title="Multi Edit" disabled><svg><use href="#modify"/></svg></button>
                <button class="mini" title="Save Edits" disabled><svg><use href="#saveedit"/></svg></button>
                <button class="mini" title="Reload"><svg><use href="#refresh"/></svg></button>
                <span class="sep"></span>
                <button class="mini" title="Add Feature" disabled><svg><use href="#layout"/></svg></button>
                <button class="mini" title="Delete" disabled><svg><use href="#trash"/></svg></button>
                <button class="mini" title="Cut" disabled><svg><use href="#cut"/></svg></button>
                <button class="mini" title="Copy" disabled><svg><use href="#copy"/></svg></button>
                <button class="mini" title="Paste" disabled><svg><use href="#paste"/></svg></button>
                <span class="sep"></span>
                <button class="mini" title="Select by Expression"><svg><use href="#exprsel"/></svg></button>
                <button class="mini" title="Select All"><svg><use href="#selall"/></svg></button>
                <button class="mini" title="Invert Selection"><svg><use href="#invert"/></svg></button>
                <button class="mini" title="Deselect All"><svg><use href="#deselect"/></svg></button>
                <button class="mini" title="Filter"><svg><use href="#filter"/></svg></button>
                <button class="mini" title="Move to Top"><svg><use href="#movetop"/></svg></button>
                <button class="mini" title="Pan to Rows"><svg><use href="#pan"/></svg></button>
                <button class="mini" title="Zoom to Rows"><svg><use href="#zoomsel"/></svg></button>
                <span class="sep"></span>
                <button class="mini" title="New Field" disabled><svg><use href="#column"/></svg></button>
                <button class="mini" title="Delete Field" disabled><svg><use href="#column"/></svg></button>
                <button class="mini" title="Field Calculator"><svg><use href="#abacus"/></svg></button>
                <span class="sep"></span>
                <button class="mini" title="Conditional Formatting"><svg><use href="#condfmt"/></svg></button>
                <span class="sep"></span>
                <button class="mini" title="Dock Table"><svg><use href="#dock"/></svg></button>
                <button class="mini" title="Actions"><svg viewBox="0 0 24 24"><circle cx="10" cy="10" r="8" fill="#fff" stroke="#888" stroke-width="3" stroke-dasharray="4 2"/><circle cx="10" cy="10" r="5.500" fill="#4f86c4"/><path d="M8 7l5 3-5 3z" fill="#fff"/><use href="#cursor" x="13" y="11" width="11" height="13"/></svg></button>
            </div>
            <div class="table-area">
                <div class="table-scroll">
                    <table class="attributes">
                        <thead>
                            <tr><th></th><th>sVotingPre</th><th>SUM_lTotal</th><th>VPMapping</th></tr>
                        </thead>
                        <tbody>
                            <tr><th>1</th><td>56913.00000…</td><td>607.0000000…</td><td>56-913</td></tr>
                            <tr><th>2</th><td>56912.00000…</td><td>0.000000000…</td><td>56-912</td></tr>
                            <tr><th>3</th><td>56919.00000…</td><td>908.0000000…</td><td>56-919</td></tr>
                            <tr><th>4</th><td>56915.00000…</td><td>20.00000000…</td><td>56-915</td></tr>
                            <tr><th>5</th><td>56926.00000…</td><td>4.000000000…</td><td>56-926</td></tr>
                            <tr><th>6</th><td>56920.00000…</td><td>27.00000000…</td><td>56-920</td></tr>
                            <tr><th>7</th><td>56935.00000…</td><td>6.000000000…</td><td>56-935</td></tr>
                            <tr><th>8</th><td>56930.00000…</td><td>414.0000000…</td><td>56-930</td></tr>
                            <tr><th>9</th><td>55408.00000…</td><td>204.0000000…</td><td>55-408</td></tr>
                            <tr><th>10</th><td>55407.00000…</td><td>120.0000000…</td><td>55-407</td></tr>
                            <tr><th>11</th><td>55504.00000…</td><td>822.0000000…</td><td>55-504</td></tr>
                            <tr class="unloaded"><th></th><td></td><td></td><td></td></tr>
                            <tr class="even"><th>32</th><td>55203.00000…</td><td>20.00000000…</td><td>55-203</td></tr>
                            <tr class="odd"><th>33</th><td>58830.00000…</td><td>188.0000000…</td><td>58-830</td></tr>
                        </tbody>
                    </table>
                </div>
                <div class="scrollbar">
                    <button class="up" title="Scroll up"></button>
                    <span class="thumb short"></span>
                    <span class="trough"></span>
                    <button class="down" title="Scroll down"></button>
                </div>
            </div>
            <div class="table-footer">
                <button class="push show-all"><svg><use href="#filter"/></svg>Show All Features</button>
                <button class="view first" title="Form view"><svg><use href="#formview"/></svg></button>
                <button class="view pressed" title="Table view"><svg><use href="#tableview"/></svg></button>
            </div>
        </section>

        <!-- Data source manager dialog -->
        <section class="dialog">
            <h1>Data Source Manager | Delimited Text</h1>
            <div class="dialog-body">
                <ul class="sources">
                    <li><svg><use href="#open"/></svg>Browser</li>
                    <li class="add"><svg><use href="#vector"/></svg>Vector</li>
                    <li class="add"><svg><use href="#raster"/></svg>Raster</li>
                    <li class="add"><svg><use href="#mesh"/></svg>Mesh</li>
                    <li class="add current"><svg><use href="#comma"/></svg>Delimited Text</li>
                    <li class="add"><svg><use href="#gpkg"/></svg>GeoPackage</li>
                    <li class="add"><svg><use href="#feather"/></svg>SpatiaLite</li>
                    <li class="add"><svg><use href="#elephant"/></svg>PostgreSQL</li>
                    <li class="add"><svg><use href="#mssql"/></svg>MSSQL</li>
                    <li class="add"><svg><use href="#db2big"/></svg>DB2</li>
                    <li class="add"><svg><use href="#virtual"/></svg>Virtual Layer</li>
                    <li class="add"><svg><use href="#globe"/></svg>WMS/WMTS</li>
                    <li class="add"><svg><use href="#wcs"/></svg>WCS</li>
                    <li class="add"><svg><use href="#wfs"/></svg>WFS</li>
                    <li class="add"><svg><use href="#arcmap"/></svg>ArcGIS Map Server</li>
                    <li class="add"><svg><use href="#arcfeat"/></svg>ArcGIS Feature Server</li>
                    <li class="add"><svg><use href="#geonode"/></svg>GeoNode</li>
                </ul>
                <div class="scrollbar">
                    <button class="up" title="Scroll up"></button>
                    <span class="thumb long"></span>
                    <span class="trough"></span>
                    <button class="down" title="Scroll down"></button>
                </div>
                <div class="pane-handle"></div>

                <form class="pane" onsubmit="return false">
                    <div class="row">
                        <label for="fileName">File name</label>
                        <span class="field file">
                            <input id="fileName" type="text" value="/home/serge/Dropbox/p/pbpl273/20w/github.io/content/lectures/data/04/065-results.csv">
                            <button type="button" title="Clear"><svg viewBox="0 0 14 12"><path d="M0 6l4-6h10v12H4z" fill="#8a8a88"/><path d="M5.500 3l5.500 6M11 3L5.500 9" stroke="#fff" stroke-width="1.300"/></svg></button>
                        </span>
                        <button type="button" class="push browse">…</button>
                    </div>
                    <div class="row">
                        <label for="layerName">Layer name</label>
                        <input class="field layer-input" id="layerName" type="text" value="065-results">
                        <label for="encoding">Encoding</label>
                        <select class="field encoding" id="encoding"><option>UTF-8</option></select>
                    </div>

                    <div class="options">
                        <div class="options-content">
                            <div class="box records">
                                <span class="discard"><label for="discard">Number of header lines to discard</label><span class="spin"><input id="discard" type="text" value="0"><span class="steps"><button type="button" title="Up"></button><button type="button" title="Down" disabled></button></span></span></span>
                                <label class="opt"><input type="checkbox" class="check">Decimal separator is comma</label>
                                <label class="opt"><input type="checkbox" class="check" checked>First record has field names</label>
                                <label class="opt"><input type="checkbox" class="check">Trim fields</label>
                                <label class="opt"><input type="checkbox" class="check" checked>Detect field types</label>
                                <label class="opt"><input type="checkbox" class="check">Discard empty fields</label>
                            </div>

                            <h2 class="fold">Geometry Definition</h2>
                            <div class="box geometry">
                                <label class="opt"><input type="radio" class="radio" name="geom">Point coordinates</label>
                                <label class="opt"><input type="radio" class="radio" name="geom">Well known text (WKT)</label>
                                <label class="opt"><input type="radio" class="radio" name="geom" checked>No geometry (attribute only table)</label>
                                <div class="crs-row">
                                    <label for="crs">Geometry CRS</label>
                                    <select class="field" id="crs"><option>EPSG:4326 - WGS 84</option></select>
                                    <button type="button" class="push crs-pick" title="Select CRS"><svg viewBox="0 0 16 16"><circle cx="7.500" cy="7.500" r="7" fill="#a9c6e4" stroke="#8a9096" stroke-width=".7"/><path d="M1 7.500h13M2 4h11M2 11h11M7.500 1v13M4.500 1.500q-3 6 0 12M10.500 1.500q3 6 0 12" stroke="#7b858f" stroke-width=".7" fill="none"/><path d="M9 9h7v7H9z" fill="#c8a800"/><path d="M10.500 14.500l3.500-4" stroke="#fff" stroke-width="1.400"/></svg></button>
                                </div>
                            </div>

                            <h2 class="fold">Layer Settings</h2>
                            <div class="box settings">
                                <label class="opt off"><input type="checkbox" class="check" disabled>Use spatial index</label>
                                <label class="opt"><input type="checkbox" class="check">Use subset index</label>
                                <label class="opt"><input type="checkbox" class="check">Watch file</label>
                            </div>

                            <h2>Sample Data</h2>
                            <div class="box sample">
                                <div class="sample-frame">
                                    <div class="sample-view">
                                        <table>
                                            <colgroup><col class="c-num"><col class="c-pct"><col class="c-clinton"><col class="c-trump"><col class="c-johnson"><col class="c-stein"><col class="c-lariva"><col class="c-other"><col class="c-usse"></colgroup>
                                            <thead>
                                                <tr><th></th><th>pct16</th><th>pres_clinton</th><th>pres_trump</th><th>pres_johnson</th><th>pres_stein</th><th>pres_lariva</th><th>pres_other</th><th>usse</th></tr>
                                            </thead>
                                            <tbody>
                                                <tr><th>1</th><td>065-11103</td><td>887</td><td>316</td><td>40</td><td>34</td><td>11</td><td>0</td><td>673</td></tr>
                                                <tr><th>2</th><td>065-11105</td><td>50</td><td>19</td><td>0</td><td>1</td><td>2</td><td>0</td><td>32</td></tr>
                                            </tbody>
                                        </table>
                                    </div>
                                    <div class="scrollbar">
                                        <button type="button" class="up" title="Scroll up"></button>
                                        <span class="thumb fill"></span>
                                        <button type="button" class="down" title="Scroll down"></button>
                                    </div>
                                    <div class="scrollbar horizontal">
                                        <button type="button" class="left" title="Scroll left"></button>
                                        <span class="thumb"></span>
                                        <span class="trough"></span>
                                        <button type="button" class="right" title="Scroll right"></button>
                                    </div>
                                    <span class="corner"></span>
                                </div>
                            </div>
                        </div>
                        <div class="scrollbar">
                            <button type="button" class="up" title="Scroll up"></button>
                            <span class="trough above"></span>
                            <span class="thumb tall"></span>
                            <button type="button" class="down" title="Scroll down"></button>
                        </div>
                    </div>

                    <div class="buttons">
                        <button type="button" class="push"><svg viewBox="0 0 14 16"><path d="M2 1h3l3 5 3.500-5H13L9 8l4.500 7h-3L7.200 9.500 2.500 15H1l5-7z" fill="#222"/></svg>Close</button>
                        <button type="button" class="push"><svg viewBox="0 0 16 16"><path d="M1 9l3-1 2.500 3.500Q10 4 15 0q-5 7-8 15.500H5.500z" fill="#6a9448" stroke="#3d5c28" stroke-width=".8"/></svg><span><u>A</u>dd</span></button>
                        <button type="button" class="push"><svg viewBox="0 0 16 16"><circle cx="8" cy="8" r="5.500" fill="none" stroke="#ececec" stroke-width="4"/><circle cx="8" cy="8" r="5.500" fill="none" stroke="#e04848" stroke-width="4.500" stroke-dasharray="4.300 4.340" stroke-dashoffset="-2.200"/><path d="M1 4V1h3M12 1h3v3M15 12v3h-3M4 15H1v-3" fill="none" stroke="#e04848"/></svg>Help</button>
                    </div>
                </form>
            </div>
        </section>
    </div>

</body>
</html>
```

FILE: styles.css
```css
* {
    box-sizing: border-box;
}

body {
    margin: 0;
    background: #232323;
    font: 12px/18px "DejaVu Sans", sans-serif;
    color: #111;
}

button, input, select {
    font: inherit;
    color: inherit;
    margin: 0;
}

button {
    padding: 0;
    border: 0;
    background: none;
}

ul {
    list-style: none;
    margin: 0;
    padding: 0;
}

.sprite {
    position: absolute;
}

.desktop {
    position: relative;
    display: grid;
    grid-template-columns: minmax(0, 951fr) minmax(0, 954fr);
    gap: 6px;
    height: 100vh;
    padding: 0 2px 2px 0;
    overflow: hidden;
}

.main-window, .table-window {
    display: flex;
    flex-direction: column;
    min-height: 0;
    overflow: hidden;
    background: #efebe7;
}

/* menu and toolbars */
.menubar {
    display: flex;
    align-items: flex-end;
    gap: 15px;
    height: 13px;
    padding: 0 7px;
    border-bottom: 1px solid #d4d0cb;
    overflow: hidden;
}

.menubar a {
    color: inherit;
    text-decoration: none;
}

u {
    text-underline-offset: 2px;
}

.toolbar {
    display: flex;
    align-items: center;
    height: 39px;
    flex: none;
    border-bottom: 1px solid #b4aeaa;
    background: linear-gradient(#f8f5f1, #ece9e4);
}

.toolbar.plugins {
    height: 38px;
}

.handle {
    flex: none;
    width: 5px;
    height: 18px;
    margin: 0 3px 0 8px;
    border: 1px dotted #bdb8b3;
    border-width: 0 1px;
}

.handle.first {
    margin: 0 2px;
}

.tool {
    display: flex;
    flex: none;
    align-items: center;
    justify-content: center;
    width: 33px;
    height: 32px;
}

.tool svg {
    width: 24px;
    height: 24px;
}

.tool:disabled svg, .mini:disabled svg {
    opacity: 0.3;
    filter: saturate(0.4);
}

.pressed {
    border: 1px solid #aaa5a1;
    border-radius: 3px;
    background: #dcd8d5;
}

.drop {
    flex: none;
    width: 12px;
    height: 12px;
}

.drop::before {
    content: "";
    display: block;
    width: 9px;
    height: 5px;
    background: #333;
    clip-path: polygon(0 0, 100% 0, 50% 100%);
}

.drop:disabled::before {
    background: #c2bfbb;
}

.more {
    width: 14px;
    font-weight: bold;
}

.more.last {
    margin: 0 3px 0 auto;
}

.more.spaced {
    margin-left: 30px;
}

/* docks */
.workspace {
    display: flex;
    flex: 1;
    min-height: 0;
}

.docks {
    display: flex;
    flex-direction: column;
    width: 435px;
    padding-right: 6px;
}

.dock {
    display: flex;
    flex: 1 1 0;
    flex-direction: column;
    min-height: 0;
}

.splitter {
    height: 5px;
    flex: none;
}

.splitter::before {
    content: "";
    display: block;
    width: 17px;
    height: 3px;
    margin: 1px auto;
    border-top: 1px dotted #aaa;
}

.dock-title {
    display: flex;
    align-items: center;
    gap: 2px;
    height: 20px;
    padding: 0 2px 0 1px;
}

.dock-title span {
    flex: 1;
}

.dock-btn svg {
    display: block;
    width: 12px;
    height: 12px;
}

.dock-tools {
    display: flex;
    align-items: center;
    height: 31px;
    padding-bottom: 2px;
}

.mini {
    display: flex;
    flex: none;
    align-items: center;
    justify-content: center;
    width: 25px;
    height: 24px;
}

.mini svg {
    width: 16px;
    height: 16px;
}

.tree {
    flex: 1;
    min-height: 0;
    border: 1px solid #b4aeaa;
    border-left: 0;
    background: #fff;
    overflow: hidden;
}

.tree li, .layer {
    display: flex;
    align-items: center;
    height: 18px;
}

.tree svg {
    width: 16px;
    height: 16px;
    margin-right: 6px;
}

.tree i {
    width: 21px;
    height: 10px;
}

.tree i::before {
    content: "";
    display: block;
}

.tree i.closed::before {
    width: 5px;
    height: 9px;
    margin-left: 5px;
    background: #444;
    clip-path: polygon(0 0, 100% 50%, 0 100%);
}

.tree i.opened::before {
    width: 9px;
    height: 5px;
    margin: 2px 3px;
    background: #444;
    clip-path: polygon(0 0, 100% 0, 50% 100%);
}

.tree .child {
    padding-left: 43px;
}

.tree .child svg {
    width: 13px;
    height: 13px;
    margin-right: 7px;
}

.layer {
    padding-left: 21px;
}

.swatch {
    width: 16px;
    height: 16px;
    margin: 0 6px;
    border: 1px solid #6a4476;
    background: #8b5a99;
}

.layer-name {
    font-weight: bold;
    text-decoration: underline;
    text-decoration-skip-ink: none;
    text-underline-offset: 2px;
}

.canvas {
    flex: 1;
    margin-top: 1px;
    border: 1px solid #b4aeaa;
    background: #fff;
}

.precincts {
    display: block;
    width: 30px;
    height: 50px;
    margin: 391px 0 0 14px;
}

/* form controls */
.field {
    height: 23px;
    padding: 0 4px;
    border: 1px solid #aaa5a1;
    border-radius: 3px;
    background: #fff;
}

input {
    min-width: 0;
    outline: none;
}

select.field {
    appearance: none;
    background:
        url("data:image/svg+xml,%3Csvg xmlns='http://www.w3.org/2000/svg' width='9' height='5'%3E%3Cpath d='M0 0h9L4.500 5z' fill='%23555'/%3E%3C/svg%3E") right 6px center no-repeat,
        linear-gradient(#fff, #eae7e3);
}

.check, .radio {
    appearance: none;
    flex: none;
    width: 14px;
    height: 14px;
    border: 1px solid #b4b0ac;
    background: #fff center no-repeat;
}

.check:checked {
    background-image: url("data:image/svg+xml,%3Csvg xmlns='http://www.w3.org/2000/svg' width='10' height='10'%3E%3Cpath d='M1.500 5l2.500 3.500L8.500 1' fill='none' stroke='%23111' stroke-width='2'/%3E%3C/svg%3E");
}

.check:disabled {
    background: none;
}

.radio {
    border-radius: 50%;
}

.radio:checked {
    background-image: radial-gradient(circle, #444 3px, transparent 4px);
}

.push {
    display: flex;
    align-items: center;
    justify-content: center;
    border: 1px solid #aaa5a1;
    border-radius: 3px;
    background: linear-gradient(#fff, #eae7e3);
}

.spin {
    display: flex;
    width: 94px;
    height: 21px;
    border: 1px solid #aaa5a1;
    border-radius: 3px;
    background: #fff;
}

.spin input {
    flex: 1;
    padding: 0 4px;
    border: 0;
    background: none;
}

.steps {
    display: flex;
    flex-direction: column;
    width: 14px;
    border-left: 1px solid #c4c0bc;
    background: linear-gradient(90deg, #fff, #f0edea);
}

.steps button {
    display: flex;
    flex: 1;
    align-items: center;
    justify-content: center;
}

.steps button::before {
    content: "";
    width: 7px;
    height: 4px;
    background: #555;
    clip-path: polygon(50% 0, 100% 100%, 0 100%);
}

.steps button:last-child::before {
    clip-path: polygon(0 0, 100% 0, 50% 100%);
}

.steps button:disabled::before {
    background: #b8b5b2;
}

/* scrollbars */
.scrollbar {
    display: flex;
    flex: none;
    flex-direction: column;
    width: 14px;
    border-left: 1px solid #b4aeaa;
}

.scrollbar button {
    display: flex;
    flex: none;
    align-items: center;
    justify-content: center;
    height: 14px;
    background: #fbfaf8;
}

.scrollbar button::before {
    content: "";
    width: 9px;
    height: 5px;
    background: #555;
    clip-path: polygon(50% 0, 100% 100%, 0 100%);
}

.scrollbar .down::before {
    clip-path: polygon(0 0, 100% 0, 50% 100%);
}

.scrollbar .down {
    border-top: 1px solid #b4aeaa;
}

.scrollbar .up {
    border-bottom: 1px solid #b4aeaa;
}

.thumb {
    background: linear-gradient(90deg, #fff, #eeebe8);
    border-bottom: 1px solid #b4aeaa;
}

.trough {
    flex: 1;
    background: #e3e1de;
}

.trough.above {
    flex: 3;
}

.thumb.short {
    height: 28px;
}

.thumb.long {
    flex: 16;
}

.thumb.tall {
    flex: 8;
    border-top: 1px solid #b4aeaa;
    border-bottom: 0;
}

.thumb.fill {
    flex: 1;
    border: 0;
}

/* status bar */
.statusbar {
    display: flex;
    align-items: center;
    height: 29px;
    flex: none;
    padding: 0 0 2px 1px;
    font-size: 9px;
}

.statusbar > * {
    flex: none;
}

.locator {
    display: flex;
    align-items: center;
    width: 248px;
    height: 23px;
    padding: 0 8px;
    border: 1px solid #aaa5a1;
    border-radius: 3px;
    background: #fff;
    font-size: 12px;
}

.locator svg {
    width: 14px;
    height: 14px;
    margin-right: 6px;
}

.locator input {
    width: 200px;
    padding: 0;
    border: 0;
}

.locator input::placeholder {
    color: #8a8a8a;
}

.legend {
    width: 17px;
    margin: 0 7px 0 8px;
    overflow: hidden;
    white-space: nowrap;
}

.clip {
    width: 4px;
    margin: 0 2px 0 9px;
    overflow: hidden;
}

.clip.left {
    margin: 0 3px 0 0;
}

.clip.wide {
    margin-right: 10px;
}

.statusbar .coord {
    width: 93px;
    padding: 0 3px;
}

.statusbar .scale {
    width: 97px;
    padding: 0 3px;
    background:
        url("data:image/svg+xml,%3Csvg xmlns='http://www.w3.org/2000/svg' width='21' height='21'%3E%3Crect width='21' height='21' fill='%23f6f4f2'/%3E%3Cpath d='M.5 0v21' stroke='%23aaa5a1'/%3E%3Cpath d='M6 9h9l-4.500 5z' fill='%23555'/%3E%3C/svg%3E") right no-repeat #fff;
}

.lock {
    width: 14px;
    height: 16px;
    margin-left: 10px;
}

.spin.small {
    width: 93px;
    height: 22px;
}

.render, .crs {
    display: flex;
    align-items: center;
    gap: 4px;
    margin-left: 6px;
}

.crs {
    margin-left: 19px;
}

.crs svg {
    width: 16px;
    height: 16px;
}

.messages {
    margin-left: 18px;
}

.messages svg {
    display: block;
    width: 16px;
    height: 16px;
}

/* attribute table */
.table-tools {
    display: flex;
    align-items: flex-end;
    height: 25px;
    flex: none;
    padding: 0 0 4px 3px;
    border-bottom: 1px solid #b4aeaa;
}

.sep {
    width: 1px;
    height: 12px;
    margin: 0 1px 5px 5px;
    background: #cfcbc6;
}

.table-area {
    display: flex;
    flex: 1;
    min-height: 0;
    border-bottom: 1px solid #b4aeaa;
}

.table-scroll {
    flex: 1;
    min-width: 0;
    overflow: hidden;
    background: linear-gradient(#efebe7 19px, #fff 19px);
}

.attributes {
    width: 339px;
    table-layout: fixed;
    border-collapse: separate;
    border-spacing: 0;
}

.attributes th, .attributes td {
    padding: 0 4px;
    border-right: 1px solid #bfbbb7;
    border-bottom: 1px solid #bfbbb7;
    white-space: nowrap;
    overflow: hidden;
}

.attributes th:first-child {
    width: 39px;
    padding: 2px 2px 0 3px;
    border-right-color: #a8a39e;
    border-bottom-color: #a8a39e;
    text-align: left;
}

.attributes th {
    background: linear-gradient(#fbf9f6, #e9e6e2);
    font-weight: normal;
}

.attributes thead th {
    height: 19px;
    line-height: 18px;
}

.attributes tbody tr {
    height: 30px;
}

.attributes td {
    background: #fff;
}

.attributes tr:nth-child(even) td, .attributes .even td {
    background: #f6f5f3;
}

.attributes .odd td {
    background: #fff;
}

.attributes .unloaded {
    height: 600px;
}

.table-area > .scrollbar {
    width: 15px;
    border-right: 1px solid #b4aeaa;
}

.table-footer {
    display: flex;
    align-items: flex-start;
    height: 26px;
    padding: 0 3px;
}

.show-all {
    height: 23px;
    width: 143px;
    justify-content: flex-start;
    gap: 4px;
    padding-left: 4px;
    white-space: nowrap;
}

.show-all svg {
    width: 16px;
    height: 16px;
}

.show-all::after {
    content: "";
    align-self: flex-end;
    width: 7px;
    height: 4px;
    margin-bottom: 3px;
    background: #444;
    clip-path: polygon(0 0, 100% 0, 50% 100%);
}

.view {
    display: flex;
    align-items: center;
    justify-content: center;
    width: 24px;
    height: 23px;
}

.view.first {
    margin-left: auto;
}

.view svg {
    width: 16px;
    height: 16px;
}

/* data source manager */
.dialog {
    position: absolute;
    top: 368px;
    right: 438px;
    bottom: 54px;
    left: 471px;
    display: flex;
    flex-direction: column;
    border: 2px solid #285577;
    border-top: 0;
    background: #efebe7;
}

.dialog h1 {
    flex: none;
    height: 22px;
    margin: 0 -2px;
    padding-left: 2px;
    border: 1px solid #4c7899;
    border-width: 1px 0;
    background: #285577;
    color: #fff;
    font: 16px/15px "Liberation Sans", sans-serif;
}

.dialog-body {
    display: flex;
    flex: 1;
    min-height: 0;
}

.sources {
    width: 258px;
    flex: none;
    overflow: hidden;
    background: #5c5c5c;
    color: #f4f4f4;
}

.sources li {
    position: relative;
    display: flex;
    align-items: center;
    height: 36px;
    padding-left: 3px;
}

.sources svg {
    width: 28px;
    height: 28px;
    margin-right: 6px;
}

.sources .add::after {
    content: "";
    position: absolute;
    left: 20px;
    top: 21px;
    width: 11px;
    height: 11px;
    border-radius: 2px;
    background:
        linear-gradient(#fff, #fff) center / 7px 3px no-repeat,
        linear-gradient(#fff, #fff) center / 3px 7px no-repeat,
        #5a8c5a;
}

.sources .current {
    padding-left: 6px;
    background: #efebe7;
    color: #111;
}

.sources .current::after {
    left: 23px;
    background-color: #4f9090;
}

.pane-handle {
    width: 3px;
    height: 17px;
    align-self: center;
    border-right: 1px dotted #aaa;
}

.pane {
    display: flex;
    flex: 1;
    flex-direction: column;
    min-width: 0;
    padding: 14px 14px 14px 12px;
}

.row {
    display: flex;
    align-items: center;
    gap: 6px;
    margin-bottom: 6px;
    white-space: nowrap;
}

.file {
    display: flex;
    flex: 1;
    align-items: center;
    padding: 0 8px 0 2px;
}

.file input {
    flex: 1;
    padding: 0;
    border: 0;
}

.file svg {
    display: block;
    width: 13px;
    height: 11px;
}

.browse {
    width: 28px;
    height: 22px;
}

.layer-input {
    width: 214px;
    padding: 0 3px;
}

.encoding {
    flex: 1;
}

.options {
    display: flex;
    flex: 1;
    min-height: 0;
    border: 1px solid #b4aeaa;
    overflow: hidden;
}

.options-content {
    flex: 1;
    min-width: 0;
    padding: 0 11px 0 12px;
}

.box {
    border: 1px solid #d6d2ce;
    border-radius: 2px;
    background: #ece8e4;
    padding: 0 12px;
}

.opt {
    display: flex;
    align-items: center;
    gap: 5px;
}

.opt.off {
    color: #c0bcb8;
}

.options h2 {
    height: 25px;
    margin: 0;
    padding-left: 1px;
    font: bold 12px/30px "DejaVu Sans", sans-serif;
}

.options .fold::before {
    content: "";
    display: inline-block;
    width: 11px;
    height: 8px;
    margin: 0 8px 0 1px;
    background: #333;
    clip-path: polygon(0 0, 100% 0, 50% 100%);
}

.records {
    display: grid;
    grid-template-columns: 320px 1fr;
    grid-auto-rows: 27px;
    align-items: center;
    border-top: 0;
    padding-top: 6px;
    padding-bottom: 11px;
}

.discard {
    display: flex;
    align-items: center;
    justify-content: space-between;
    padding-right: 15px;
    white-space: nowrap;
}

.geometry {
    padding-top: 8px;
    padding-bottom: 13px;
}

.geometry .opt {
    height: 27px;
    gap: 6px;
}

.crs-row {
    display: flex;
    align-items: center;
    gap: 6px;
    padding-top: 4px;
}

.crs-row label {
    width: 232px;
}

.crs-row .field {
    flex: 1;
}

.crs-pick {
    width: 24px;
    height: 23px;
}

.crs-pick svg {
    width: 16px;
    height: 16px;
}

.settings {
    display: grid;
    grid-template-columns: 1fr 1fr 1fr;
    height: 48px;
    padding-right: 7px;
    align-items: center;
}

.sample {
    padding-top: 12px;
    padding-bottom: 13px;
}

.sample-frame {
    display: grid;
    grid-template-columns: minmax(0, 1fr) 14px;
    grid-template-rows: 54px 14px;
    border: 1px solid #b4aeaa;
    background: #fff;
}

.sample-view {
    overflow: hidden;
}

.sample table {
    width: 640px;
    table-layout: fixed;
    border-collapse: separate;
    border-spacing: 0;
}

.sample th, .sample td {
    height: 19px;
    padding: 0 0 0 3px;
    border-right: 1px solid #bfbbb7;
    border-bottom: 1px solid #bfbbb7;
    line-height: 18px;
    white-space: nowrap;
}

.sample th {
    background: linear-gradient(#fbf9f6, #e9e6e2);
    font-weight: normal;
}

.sample tbody th {
    padding-left: 2px;
    text-align: left;
}

.c-num { width: 21px; }
.c-pct { width: 73px; }
.c-clinton { width: 87px; }
.c-trump { width: 81px; }
.c-johnson { width: 94px; }
.c-stein { width: 74px; }
.c-lariva { width: 78px; }
.c-other { width: 77px; }

.scrollbar.horizontal {
    flex-direction: row;
    width: auto;
    border-left: 0;
    border-top: 1px solid #b4aeaa;
}

.horizontal button {
    width: 14px;
    height: 13px;
}

.horizontal .left {
    border-right: 1px solid #b4aeaa;
}

.horizontal .right {
    border-left: 1px solid #b4aeaa;
}

.horizontal .left::before, .horizontal .right::before {
    width: 5px;
    height: 9px;
    clip-path: polygon(100% 0, 100% 100%, 0 50%);
}

.horizontal .right::before {
    clip-path: polygon(0 0, 100% 50%, 0 100%);
}

.horizontal .thumb {
    width: 96px;
    border-bottom: 0;
    border-right: 1px solid #b4aeaa;
    background: #fbfaf8;
}

.corner {
    border: 1px solid #b4aeaa;
    border-width: 1px 0 0 1px;
    background: #efebe7;
}

.buttons {
    display: flex;
    justify-content: flex-end;
    gap: 6px;
    margin-top: 27px;
}

.buttons .push {
    width: 80px;
    height: 24px;
    gap: 2px;
}

.buttons svg {
    width: 16px;
    height: 16px;
}
```
